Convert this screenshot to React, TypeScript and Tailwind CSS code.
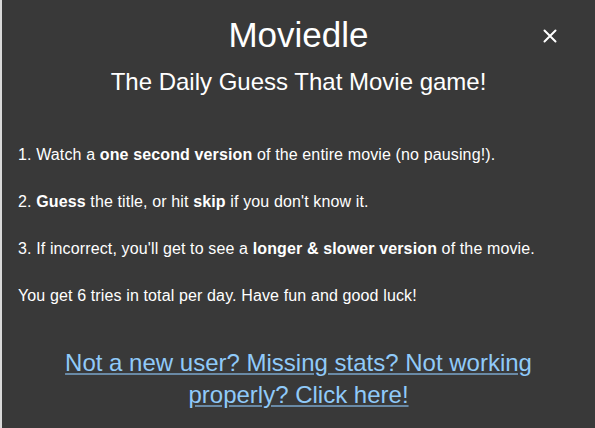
export default function App() {
  return (
    <div
      className="w-[595px] h-[428px] overflow-hidden bg-[#393939] border-l-2 border-[#d9d9d9] text-white"
      style={{ fontFamily: '"Liberation Sans", Arial, sans-serif' }}
    >
      {/* Header */}
      <div className="relative pt-[15px]">
        <h1 className="text-center text-[35px] leading-[40px] font-normal">Moviedle</h1>
        <button
          className="absolute right-[37px] top-[28px] w-[16px] h-[16px] flex items-center justify-center"
          aria-label="close"
        >
          <svg width="14" height="14" viewBox="0 0 14 14">
            <path d="M1.5 1.5 L12.5 12.5 M12.5 1.5 L1.5 12.5" stroke="#fff" strokeWidth="2" strokeLinecap="round" />
          </svg>
        </button>
        <h2 className="mt-[13px] text-center text-[24px] leading-[28px] font-normal">
          The Daily Guess That Movie game!
        </h2>
      </div>

      {/* Rules */}
      <div className="mt-[50px] pl-[16px] pr-4 text-[16px] leading-[18px] tracking-[0.13px] flex flex-col gap-[29px]">
        <p>
          1. Watch a <b>one second version</b> of the entire movie (no pausing!).
        </p>
        <p>
          2. <b>Guess</b> the title, or hit <b>skip</b> if you don't know it.
        </p>
        <p>
          3. If incorrect, you'll get to see a <b>longer &amp; slower version</b> of the movie.
        </p>
        <p>You get 6 tries in total per day. Have fun and good luck!</p>
      </div>

      {/* Help link */}
      <div className="mt-[42px] flex justify-center">
        <a
          href="#"
          className="block max-w-[520px] text-center text-[24px] leading-[32px] text-[#90caf9] underline decoration-[#6a8aa6]"
        >
          Not a new user? Missing stats? Not working properly? Click here!
        </a>
      </div>
    </div>
  );
}
